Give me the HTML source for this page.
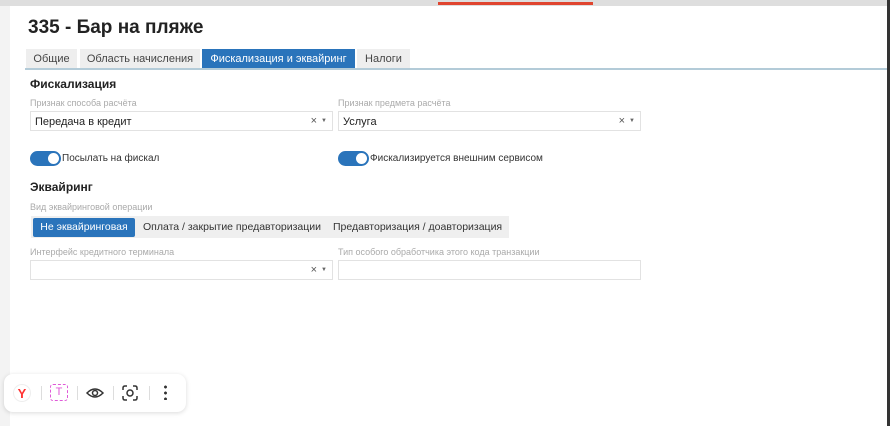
<!DOCTYPE html>
<html><head><meta charset="utf-8"><style>
*{box-sizing:border-box;margin:0;padding:0}
body{width:890px;height:426px;overflow:hidden;background:#fff;font-family:"Liberation Sans",sans-serif;position:relative;color:#222}
.abs{position:absolute}
.lbl{position:absolute;font-size:9px;color:#aaa}
.inp{position:absolute;height:20px;border:1px solid #e2e2e2;font-size:11px;padding:4px 4px;color:#222}
.inp .x{position:absolute;right:15px;top:3px;font-size:11px;color:#555}
.inp .d{position:absolute;right:5px;top:6px;font-size:6px;color:#666}
.tab{position:absolute;top:49px;height:20px;background:#eee;font-size:11px;color:#444;text-align:center;line-height:20px}
.tog{position:absolute;width:31px;height:15px;border-radius:8px;background:#2a74bb}
.tog::after{content:"";position:absolute;right:2px;top:2px;width:11px;height:11px;border-radius:50%;background:#fff}
.tl{position:absolute;font-size:10px;color:#333}
</style></head><body>
<div class="abs" style="left:0;top:0;width:890px;height:6px;background:#dedede"></div>
<div class="abs" style="left:438px;top:2px;width:155px;height:3px;background:#e0452f"></div>
<div class="abs" style="left:0;top:6px;width:10px;height:420px;background:#f3f3f3"></div>
<div class="abs" style="left:887px;top:0;width:3px;height:426px;background:#333"></div>
<div class="abs" style="left:28px;top:17px;font-size:19px;font-weight:bold;color:#222">335 - Бар на пляже</div>
<div class="tab" style="left:26px;width:51px">Общие</div>
<div class="tab" style="left:80px;width:120px">Область начисления</div>
<div class="tab" style="left:202px;width:153px;background:#2a74bb;color:#fff">Фискализация и эквайринг</div>
<div class="tab" style="left:357px;width:53px">Налоги</div>
<div class="abs" style="left:25px;top:68px;width:862px;height:2px;background:#b3cbd8"></div>
<div class="abs" style="left:30px;top:77px;font-size:12px;font-weight:bold">Фискализация</div>
<div class="lbl" style="left:30px;top:98px">Признак способа расчёта</div>
<div class="lbl" style="left:338px;top:98px">Признак предмета расчёта</div>
<div class="inp" style="left:30px;top:111px;width:303px">Передача в кредит<span class="x">×</span><span class="d">▼</span></div>
<div class="inp" style="left:338px;top:111px;width:303px">Услуга<span class="x">×</span><span class="d">▼</span></div>
<div class="tog" style="left:30px;top:151px"></div><div class="tl" style="left:62px;top:153px">Посылать на фискал</div>
<div class="tog" style="left:338px;top:151px"></div><div class="tl" style="left:370px;top:153px">Фискализируется внешним сервисом</div>
<div class="abs" style="left:30px;top:180px;font-size:12px;font-weight:bold">Эквайринг</div>
<div class="lbl" style="left:30px;top:202px">Вид эквайринговой операции</div>
<div class="abs" style="left:31px;top:216px;width:478px;height:22px;background:#efefef"></div>
<div class="abs" style="left:33px;top:218px;width:102px;height:19px;background:#2a74bb;border-radius:2px;color:#fff;font-size:10.5px;line-height:19px;text-align:center">Не эквайринговая</div>
<div class="abs" style="left:143px;top:221px;font-size:10.5px;color:#333">Оплата / закрытие предавторизации</div>
<div class="abs" style="left:333px;top:221px;font-size:10.5px;color:#333">Предавторизация / доавторизация</div>
<div class="lbl" style="left:30px;top:247px">Интерфейс кредитного терминала</div>
<div class="lbl" style="left:338px;top:247px">Тип особого обработчика этого кода транзакции</div>
<div class="inp" style="left:30px;top:260px;width:303px"><span class="x">×</span><span class="d">▼</span></div>
<div class="inp" style="left:338px;top:260px;width:303px"></div>
<div class="abs" style="left:4px;top:374px;width:182px;height:38px;background:#fff;border-radius:9px;box-shadow:0 1px 5px rgba(0,0,0,.15)"></div>
<div class="abs" style="left:13px;top:384px;width:18px;height:18px;border-radius:50%;border:1px solid #eee;color:#f33;font-weight:bold;font-size:13px;text-align:center;line-height:17px">Y</div>
<div class="abs" style="left:41px;top:386px;width:1px;height:14px;background:#ddd"></div>
<div class="abs" style="left:50px;top:384px;width:18px;height:17px;border:1.5px dashed #e05ad8;border-radius:3px;color:#e05ad8;font-size:11px;text-align:center;line-height:14px">T</div>
<div class="abs" style="left:77px;top:386px;width:1px;height:14px;background:#ddd"></div>
<svg class="abs" style="left:85px;top:385px" width="20" height="16" viewBox="0 0 20 16"><path d="M2 8Q10 0 18 8Q10 16 2 8Z" fill="none" stroke="#333" stroke-width="1.5"/><circle cx="10" cy="8" r="2.5" fill="none" stroke="#333" stroke-width="1.5"/></svg>
<div class="abs" style="left:113px;top:386px;width:1px;height:14px;background:#ddd"></div>
<svg class="abs" style="left:121px;top:384px" width="18" height="18" viewBox="0 0 18 18"><path d="M2 6V4Q2 2 4 2H6M12 2H14Q16 2 16 4V6M16 12V14Q16 16 14 16H12M6 16H4Q2 16 2 14V12" fill="none" stroke="#333" stroke-width="1.5"/><circle cx="9" cy="9" r="3" fill="none" stroke="#333" stroke-width="1.5"/></svg>
<div class="abs" style="left:149px;top:386px;width:1px;height:14px;background:#ddd"></div>
<div class="abs" style="left:164px;top:384px;width:3px;height:16px;background:radial-gradient(circle,#333 1.3px,transparent 1.6px) 0 0/3px 6px"></div>
</body></html>
